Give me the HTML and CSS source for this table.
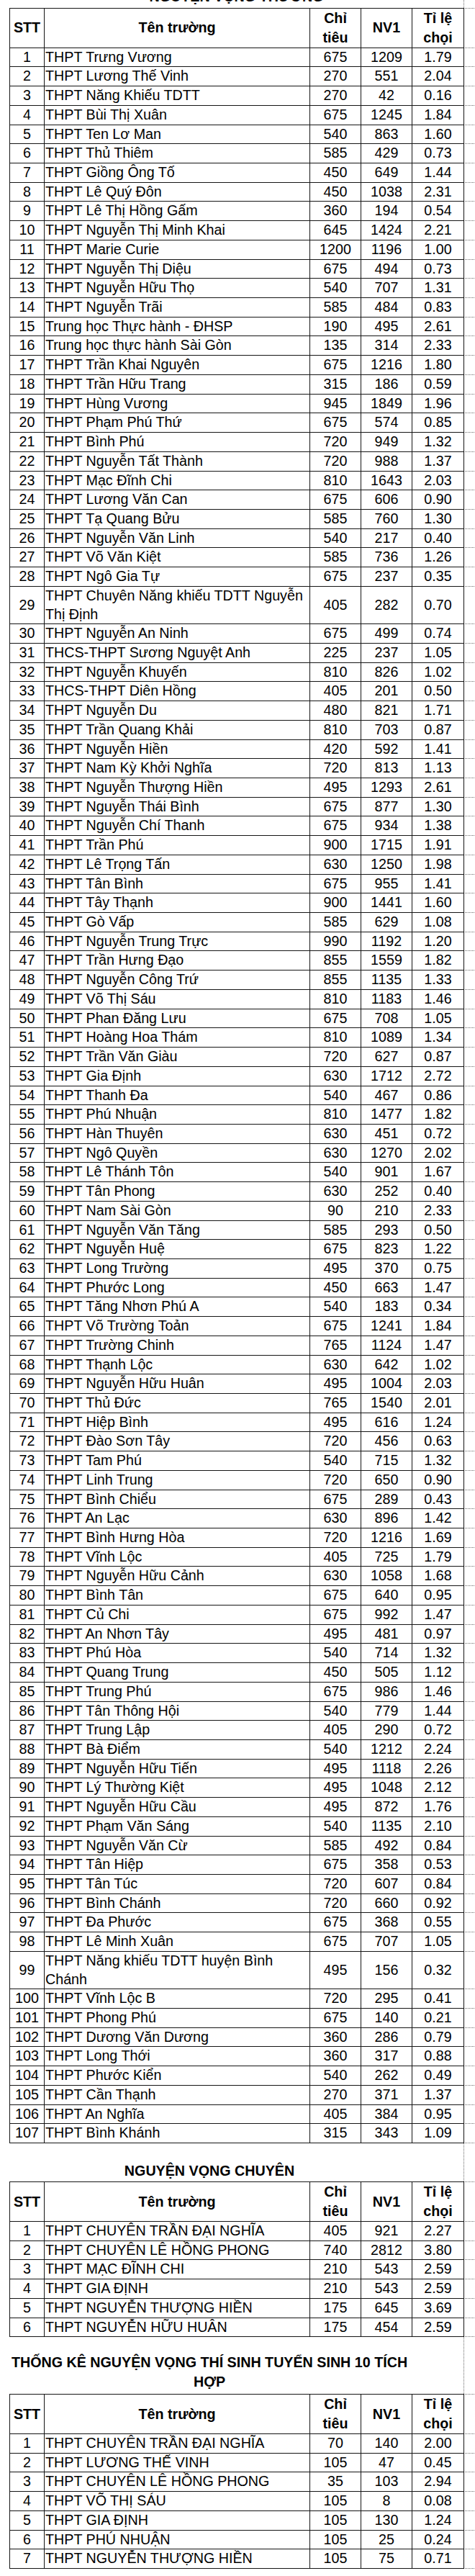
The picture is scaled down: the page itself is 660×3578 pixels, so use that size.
FILE: index.html
```html
<!DOCTYPE html>
<html lang="vi">
<head>
<meta charset="utf-8">
<title>Nguyện vọng tuyển sinh 10</title>
<link rel="stylesheet" href="styles.css">
</head>
<body>
<div class="sheet">
  <div class="title title-first"><div class="title-text title-wide">NGUYỆN VỌNG THƯỜNG</div></div>
  <table class="grid">
    <colgroup><col class="c-stt"><col class="c-name"><col class="c-num"><col class="c-num"><col class="c-rate"></colgroup>
    <thead>
      <tr><th>STT</th><th>Tên trường</th><th>Chỉ<br>tiêu</th><th>NV1</th><th>Tỉ lệ<br>chọi</th></tr>
    </thead>
    <tbody>
      <tr><td>1</td><td>THPT Trưng Vương</td><td>675</td><td>1209</td><td>1.79</td></tr>
      <tr><td>2</td><td>THPT Lương Thế Vinh</td><td>270</td><td>551</td><td>2.04</td></tr>
      <tr><td>3</td><td>THPT Năng Khiếu TDTT</td><td>270</td><td>42</td><td>0.16</td></tr>
      <tr><td>4</td><td>THPT Bùi Thị Xuân</td><td>675</td><td>1245</td><td>1.84</td></tr>
      <tr><td>5</td><td>THPT Ten Lơ Man</td><td>540</td><td>863</td><td>1.60</td></tr>
      <tr><td>6</td><td>THPT Thủ Thiêm</td><td>585</td><td>429</td><td>0.73</td></tr>
      <tr><td>7</td><td>THPT Giồng Ông Tố</td><td>450</td><td>649</td><td>1.44</td></tr>
      <tr><td>8</td><td>THPT Lê Quý Đôn</td><td>450</td><td>1038</td><td>2.31</td></tr>
      <tr><td>9</td><td>THPT Lê Thị Hồng Gấm</td><td>360</td><td>194</td><td>0.54</td></tr>
      <tr><td>10</td><td>THPT Nguyễn Thị Minh Khai</td><td>645</td><td>1424</td><td>2.21</td></tr>
      <tr><td>11</td><td>THPT Marie Curie</td><td>1200</td><td>1196</td><td>1.00</td></tr>
      <tr><td>12</td><td>THPT Nguyễn Thị Diệu</td><td>675</td><td>494</td><td>0.73</td></tr>
      <tr><td>13</td><td>THPT Nguyễn Hữu Thọ</td><td>540</td><td>707</td><td>1.31</td></tr>
      <tr><td>14</td><td>THPT Nguyễn Trãi</td><td>585</td><td>484</td><td>0.83</td></tr>
      <tr><td>15</td><td>Trung học Thực hành - ĐHSP</td><td>190</td><td>495</td><td>2.61</td></tr>
      <tr><td>16</td><td>Trung học thực hành Sài Gòn</td><td>135</td><td>314</td><td>2.33</td></tr>
      <tr><td>17</td><td>THPT Trần Khai Nguyên</td><td>675</td><td>1216</td><td>1.80</td></tr>
      <tr><td>18</td><td>THPT Trần Hữu Trang</td><td>315</td><td>186</td><td>0.59</td></tr>
      <tr><td>19</td><td>THPT Hùng Vương</td><td>945</td><td>1849</td><td>1.96</td></tr>
      <tr><td>20</td><td>THPT Phạm Phú Thứ</td><td>675</td><td>574</td><td>0.85</td></tr>
      <tr><td>21</td><td>THPT Bình Phú</td><td>720</td><td>949</td><td>1.32</td></tr>
      <tr><td>22</td><td>THPT Nguyễn Tất Thành</td><td>720</td><td>988</td><td>1.37</td></tr>
      <tr><td>23</td><td>THPT Mạc Đĩnh Chi</td><td>810</td><td>1643</td><td>2.03</td></tr>
      <tr><td>24</td><td>THPT Lương Văn Can</td><td>675</td><td>606</td><td>0.90</td></tr>
      <tr><td>25</td><td>THPT Tạ Quang Bửu</td><td>585</td><td>760</td><td>1.30</td></tr>
      <tr><td>26</td><td>THPT Nguyễn Văn Linh</td><td>540</td><td>217</td><td>0.40</td></tr>
      <tr><td>27</td><td>THPT Võ Văn Kiệt</td><td>585</td><td>736</td><td>1.26</td></tr>
      <tr><td>28</td><td>THPT Ngô Gia Tự</td><td>675</td><td>237</td><td>0.35</td></tr>
      <tr><td>29</td><td>THPT Chuyên Năng khiếu TDTT Nguyễn Thị Định</td><td>405</td><td>282</td><td>0.70</td></tr>
      <tr><td>30</td><td>THPT Nguyễn An Ninh</td><td>675</td><td>499</td><td>0.74</td></tr>
      <tr><td>31</td><td>THCS-THPT Sương Nguyệt Anh</td><td>225</td><td>237</td><td>1.05</td></tr>
      <tr><td>32</td><td>THPT Nguyễn Khuyến</td><td>810</td><td>826</td><td>1.02</td></tr>
      <tr><td>33</td><td>THCS-THPT Diên Hồng</td><td>405</td><td>201</td><td>0.50</td></tr>
      <tr><td>34</td><td>THPT Nguyễn Du</td><td>480</td><td>821</td><td>1.71</td></tr>
      <tr><td>35</td><td>THPT Trần Quang Khải</td><td>810</td><td>703</td><td>0.87</td></tr>
      <tr><td>36</td><td>THPT Nguyễn Hiền</td><td>420</td><td>592</td><td>1.41</td></tr>
      <tr><td>37</td><td>THPT Nam Kỳ Khởi Nghĩa</td><td>720</td><td>813</td><td>1.13</td></tr>
      <tr><td>38</td><td>THPT Nguyễn Thượng Hiền</td><td>495</td><td>1293</td><td>2.61</td></tr>
      <tr><td>39</td><td>THPT Nguyễn Thái Bình</td><td>675</td><td>877</td><td>1.30</td></tr>
      <tr><td>40</td><td>THPT Nguyễn Chí Thanh</td><td>675</td><td>934</td><td>1.38</td></tr>
      <tr><td>41</td><td>THPT Trần Phú</td><td>900</td><td>1715</td><td>1.91</td></tr>
      <tr><td>42</td><td>THPT Lê Trọng Tấn</td><td>630</td><td>1250</td><td>1.98</td></tr>
      <tr><td>43</td><td>THPT Tân Bình</td><td>675</td><td>955</td><td>1.41</td></tr>
      <tr><td>44</td><td>THPT Tây Thạnh</td><td>900</td><td>1441</td><td>1.60</td></tr>
      <tr><td>45</td><td>THPT Gò Vấp</td><td>585</td><td>629</td><td>1.08</td></tr>
      <tr><td>46</td><td>THPT Nguyễn Trung Trực</td><td>990</td><td>1192</td><td>1.20</td></tr>
      <tr><td>47</td><td>THPT Trần Hưng Đạo</td><td>855</td><td>1559</td><td>1.82</td></tr>
      <tr><td>48</td><td>THPT Nguyễn Công Trứ</td><td>855</td><td>1135</td><td>1.33</td></tr>
      <tr><td>49</td><td>THPT Võ Thị Sáu</td><td>810</td><td>1183</td><td>1.46</td></tr>
      <tr><td>50</td><td>THPT Phan Đăng Lưu</td><td>675</td><td>708</td><td>1.05</td></tr>
      <tr><td>51</td><td>THPT Hoàng Hoa Thám</td><td>810</td><td>1089</td><td>1.34</td></tr>
      <tr><td>52</td><td>THPT Trần Văn Giàu</td><td>720</td><td>627</td><td>0.87</td></tr>
      <tr><td>53</td><td>THPT Gia Định</td><td>630</td><td>1712</td><td>2.72</td></tr>
      <tr><td>54</td><td>THPT Thanh Đa</td><td>540</td><td>467</td><td>0.86</td></tr>
      <tr><td>55</td><td>THPT Phú Nhuận</td><td>810</td><td>1477</td><td>1.82</td></tr>
      <tr><td>56</td><td>THPT Hàn Thuyên</td><td>630</td><td>451</td><td>0.72</td></tr>
      <tr><td>57</td><td>THPT Ngô Quyền</td><td>630</td><td>1270</td><td>2.02</td></tr>
      <tr><td>58</td><td>THPT Lê Thánh Tôn</td><td>540</td><td>901</td><td>1.67</td></tr>
      <tr><td>59</td><td>THPT Tân Phong</td><td>630</td><td>252</td><td>0.40</td></tr>
      <tr><td>60</td><td>THPT Nam Sài Gòn</td><td>90</td><td>210</td><td>2.33</td></tr>
      <tr><td>61</td><td>THPT Nguyễn Văn Tăng</td><td>585</td><td>293</td><td>0.50</td></tr>
      <tr><td>62</td><td>THPT Nguyễn Huệ</td><td>675</td><td>823</td><td>1.22</td></tr>
      <tr><td>63</td><td>THPT Long Trường</td><td>495</td><td>370</td><td>0.75</td></tr>
      <tr><td>64</td><td>THPT Phước Long</td><td>450</td><td>663</td><td>1.47</td></tr>
      <tr><td>65</td><td>THPT Tăng Nhơn Phú A</td><td>540</td><td>183</td><td>0.34</td></tr>
      <tr><td>66</td><td>THPT Võ Trường Toản</td><td>675</td><td>1241</td><td>1.84</td></tr>
      <tr><td>67</td><td>THPT Trường Chinh</td><td>765</td><td>1124</td><td>1.47</td></tr>
      <tr><td>68</td><td>THPT Thạnh Lộc</td><td>630</td><td>642</td><td>1.02</td></tr>
      <tr><td>69</td><td>THPT Nguyễn Hữu Huân</td><td>495</td><td>1004</td><td>2.03</td></tr>
      <tr><td>70</td><td>THPT Thủ Đức</td><td>765</td><td>1540</td><td>2.01</td></tr>
      <tr><td>71</td><td>THPT Hiệp Bình</td><td>495</td><td>616</td><td>1.24</td></tr>
      <tr><td>72</td><td>THPT Đào Sơn Tây</td><td>720</td><td>456</td><td>0.63</td></tr>
      <tr><td>73</td><td>THPT Tam Phú</td><td>540</td><td>715</td><td>1.32</td></tr>
      <tr><td>74</td><td>THPT Linh Trung</td><td>720</td><td>650</td><td>0.90</td></tr>
      <tr><td>75</td><td>THPT Bình Chiểu</td><td>675</td><td>289</td><td>0.43</td></tr>
      <tr><td>76</td><td>THPT An Lạc</td><td>630</td><td>896</td><td>1.42</td></tr>
      <tr><td>77</td><td>THPT Bình Hưng Hòa</td><td>720</td><td>1216</td><td>1.69</td></tr>
      <tr><td>78</td><td>THPT Vĩnh Lộc</td><td>405</td><td>725</td><td>1.79</td></tr>
      <tr><td>79</td><td>THPT Nguyễn Hữu Cảnh</td><td>630</td><td>1058</td><td>1.68</td></tr>
      <tr><td>80</td><td>THPT Bình Tân</td><td>675</td><td>640</td><td>0.95</td></tr>
      <tr><td>81</td><td>THPT Củ Chi</td><td>675</td><td>992</td><td>1.47</td></tr>
      <tr><td>82</td><td>THPT An Nhơn Tây</td><td>495</td><td>481</td><td>0.97</td></tr>
      <tr><td>83</td><td>THPT Phú Hòa</td><td>540</td><td>714</td><td>1.32</td></tr>
      <tr><td>84</td><td>THPT Quang Trung</td><td>450</td><td>505</td><td>1.12</td></tr>
      <tr><td>85</td><td>THPT Trung Phú</td><td>675</td><td>986</td><td>1.46</td></tr>
      <tr><td>86</td><td>THPT Tân Thông Hội</td><td>540</td><td>779</td><td>1.44</td></tr>
      <tr><td>87</td><td>THPT Trung Lập</td><td>405</td><td>290</td><td>0.72</td></tr>
      <tr><td>88</td><td>THPT Bà Điểm</td><td>540</td><td>1212</td><td>2.24</td></tr>
      <tr><td>89</td><td>THPT Nguyễn Hữu Tiến</td><td>495</td><td>1118</td><td>2.26</td></tr>
      <tr><td>90</td><td>THPT Lý Thường Kiệt</td><td>495</td><td>1048</td><td>2.12</td></tr>
      <tr><td>91</td><td>THPT Nguyễn Hữu Cầu</td><td>495</td><td>872</td><td>1.76</td></tr>
      <tr><td>92</td><td>THPT Phạm Văn Sáng</td><td>540</td><td>1135</td><td>2.10</td></tr>
      <tr><td>93</td><td>THPT Nguyễn Văn Cừ</td><td>585</td><td>492</td><td>0.84</td></tr>
      <tr><td>94</td><td>THPT Tân Hiệp</td><td>675</td><td>358</td><td>0.53</td></tr>
      <tr><td>95</td><td>THPT Tân Túc</td><td>720</td><td>607</td><td>0.84</td></tr>
      <tr><td>96</td><td>THPT Bình Chánh</td><td>720</td><td>660</td><td>0.92</td></tr>
      <tr><td>97</td><td>THPT Đa Phước</td><td>675</td><td>368</td><td>0.55</td></tr>
      <tr><td>98</td><td>THPT Lê Minh Xuân</td><td>675</td><td>707</td><td>1.05</td></tr>
      <tr><td>99</td><td>THPT Năng khiếu TDTT huyện Bình Chánh</td><td>495</td><td>156</td><td>0.32</td></tr>
      <tr><td>100</td><td>THPT Vĩnh Lộc B</td><td>720</td><td>295</td><td>0.41</td></tr>
      <tr><td>101</td><td>THPT Phong Phú</td><td>675</td><td>140</td><td>0.21</td></tr>
      <tr><td>102</td><td>THPT Dương Văn Dương</td><td>360</td><td>286</td><td>0.79</td></tr>
      <tr><td>103</td><td>THPT Long Thới</td><td>360</td><td>317</td><td>0.88</td></tr>
      <tr><td>104</td><td>THPT Phước Kiển</td><td>540</td><td>262</td><td>0.49</td></tr>
      <tr><td>105</td><td>THPT Cần Thạnh</td><td>270</td><td>371</td><td>1.37</td></tr>
      <tr><td>106</td><td>THPT An Nghĩa</td><td>405</td><td>384</td><td>0.95</td></tr>
      <tr><td>107</td><td>THPT Bình Khánh</td><td>315</td><td>343</td><td>1.09</td></tr>
    </tbody>
  </table>

  <div class="title title-second"><div class="title-text">NGUYỆN VỌNG CHUYÊN</div></div>
  <table class="grid">
    <colgroup><col class="c-stt"><col class="c-name"><col class="c-num"><col class="c-num"><col class="c-rate"></colgroup>
    <thead>
      <tr><th>STT</th><th>Tên trường</th><th>Chỉ<br>tiêu</th><th>NV1</th><th>Tỉ lệ<br>chọi</th></tr>
    </thead>
    <tbody>
      <tr><td>1</td><td>THPT CHUYÊN TRẦN ĐẠI NGHĨA</td><td>405</td><td>921</td><td>2.27</td></tr>
      <tr><td>2</td><td>THPT CHUYÊN LÊ HỒNG PHONG</td><td>740</td><td>2812</td><td>3.80</td></tr>
      <tr><td>3</td><td>THPT MẠC ĐĨNH CHI</td><td>210</td><td>543</td><td>2.59</td></tr>
      <tr><td>4</td><td>THPT GIA ĐỊNH</td><td>210</td><td>543</td><td>2.59</td></tr>
      <tr><td>5</td><td>THPT NGUYỄN THƯỢNG HIỀN</td><td>175</td><td>645</td><td>3.69</td></tr>
      <tr><td>6</td><td>THPT NGUYỄN HỮU HUÂN</td><td>175</td><td>454</td><td>2.59</td></tr>
    </tbody>
  </table>

  <div class="title title-third"><div class="title-text">THỐNG KÊ NGUYỆN VỌNG THÍ SINH TUYỂN SINH 10 TÍCH<br>HỢP</div></div>
  <table class="grid">
    <colgroup><col class="c-stt"><col class="c-name"><col class="c-num"><col class="c-num"><col class="c-rate"></colgroup>
    <thead>
      <tr><th>STT</th><th>Tên trường</th><th>Chỉ<br>tiêu</th><th>NV1</th><th>Tỉ lệ<br>chọi</th></tr>
    </thead>
    <tbody>
      <tr><td>1</td><td>THPT CHUYÊN TRẦN ĐẠI NGHĨA</td><td>70</td><td>140</td><td>2.00</td></tr>
      <tr><td>2</td><td>THPT LƯƠNG THẾ VINH</td><td>105</td><td>47</td><td>0.45</td></tr>
      <tr><td>3</td><td>THPT CHUYÊN LÊ HỒNG PHONG</td><td>35</td><td>103</td><td>2.94</td></tr>
      <tr><td>4</td><td>THPT VÕ THỊ SÁU</td><td>105</td><td>8</td><td>0.08</td></tr>
      <tr><td>5</td><td>THPT GIA ĐỊNH</td><td>105</td><td>130</td><td>1.24</td></tr>
      <tr><td>6</td><td>THPT PHÚ NHUẬN</td><td>105</td><td>25</td><td>0.24</td></tr>
      <tr><td>7</td><td>THPT NGUYỄN THƯỢNG HIỀN</td><td>105</td><td>75</td><td>0.71</td></tr>
    </tbody>
  </table>
</div>
</body>
</html>
```

FILE: styles.css
```css
html, body {
  margin: 0;
  padding: 0;
  background: #ffffff;
}

body {
  font-family: "Liberation Sans", Arial, "Noto Sans", sans-serif;
  font-size: 19.7px;
  color: #000000;
}

.sheet {
  padding-left: 13px;
}

.title {
  width: 631px;
  border-right: 1px dotted #6a6a6a;
  font-weight: bold;
  font-size: 19.7px;
  line-height: 27px;
}

.title-text {
  width: 556px;
  text-align: center;
}

.title-wide {
  width: 631px;
}

.title-first {
  margin-top: -18.25px;
  padding-bottom: 2.25px;
}

.title-second {
  padding-top: 24.5px;
  padding-bottom: 1.8px;
}

.title-third {
  padding-top: 22px;
  padding-bottom: 3px;
}

.grid {
  border-collapse: collapse;
  table-layout: fixed;
  width: 631px;
}

.c-stt { width: 48px; }
.c-name { width: 369px; }
.c-num { width: 71px; }
.c-rate { width: 72px; }

.grid th,
.grid td {
  border: 1px solid #151515;
  padding: 0;
  vertical-align: middle;
  text-align: center;
}

.grid th {
  font-weight: bold;
  line-height: 26.85px;
}

.grid td {
  font-weight: normal;
  line-height: 25.72px;
}

.grid td:nth-child(2) {
  text-align: left;
  padding-left: 1px;
}

.grid th:last-child,
.grid td:last-child {
  position: relative;
}

.grid th:last-child::after,
.grid td:last-child::after {
  content: "";
  position: absolute;
  left: calc(100% + 2px);
  top: -1px;
  width: 15px;
  border-top: 1px dotted #6a6a6a;
}

.grid tbody tr:last-child td:last-child::before {
  content: "";
  position: absolute;
  left: calc(100% + 2px);
  bottom: -1px;
  width: 15px;
  border-top: 1px dotted #6a6a6a;
}
```
